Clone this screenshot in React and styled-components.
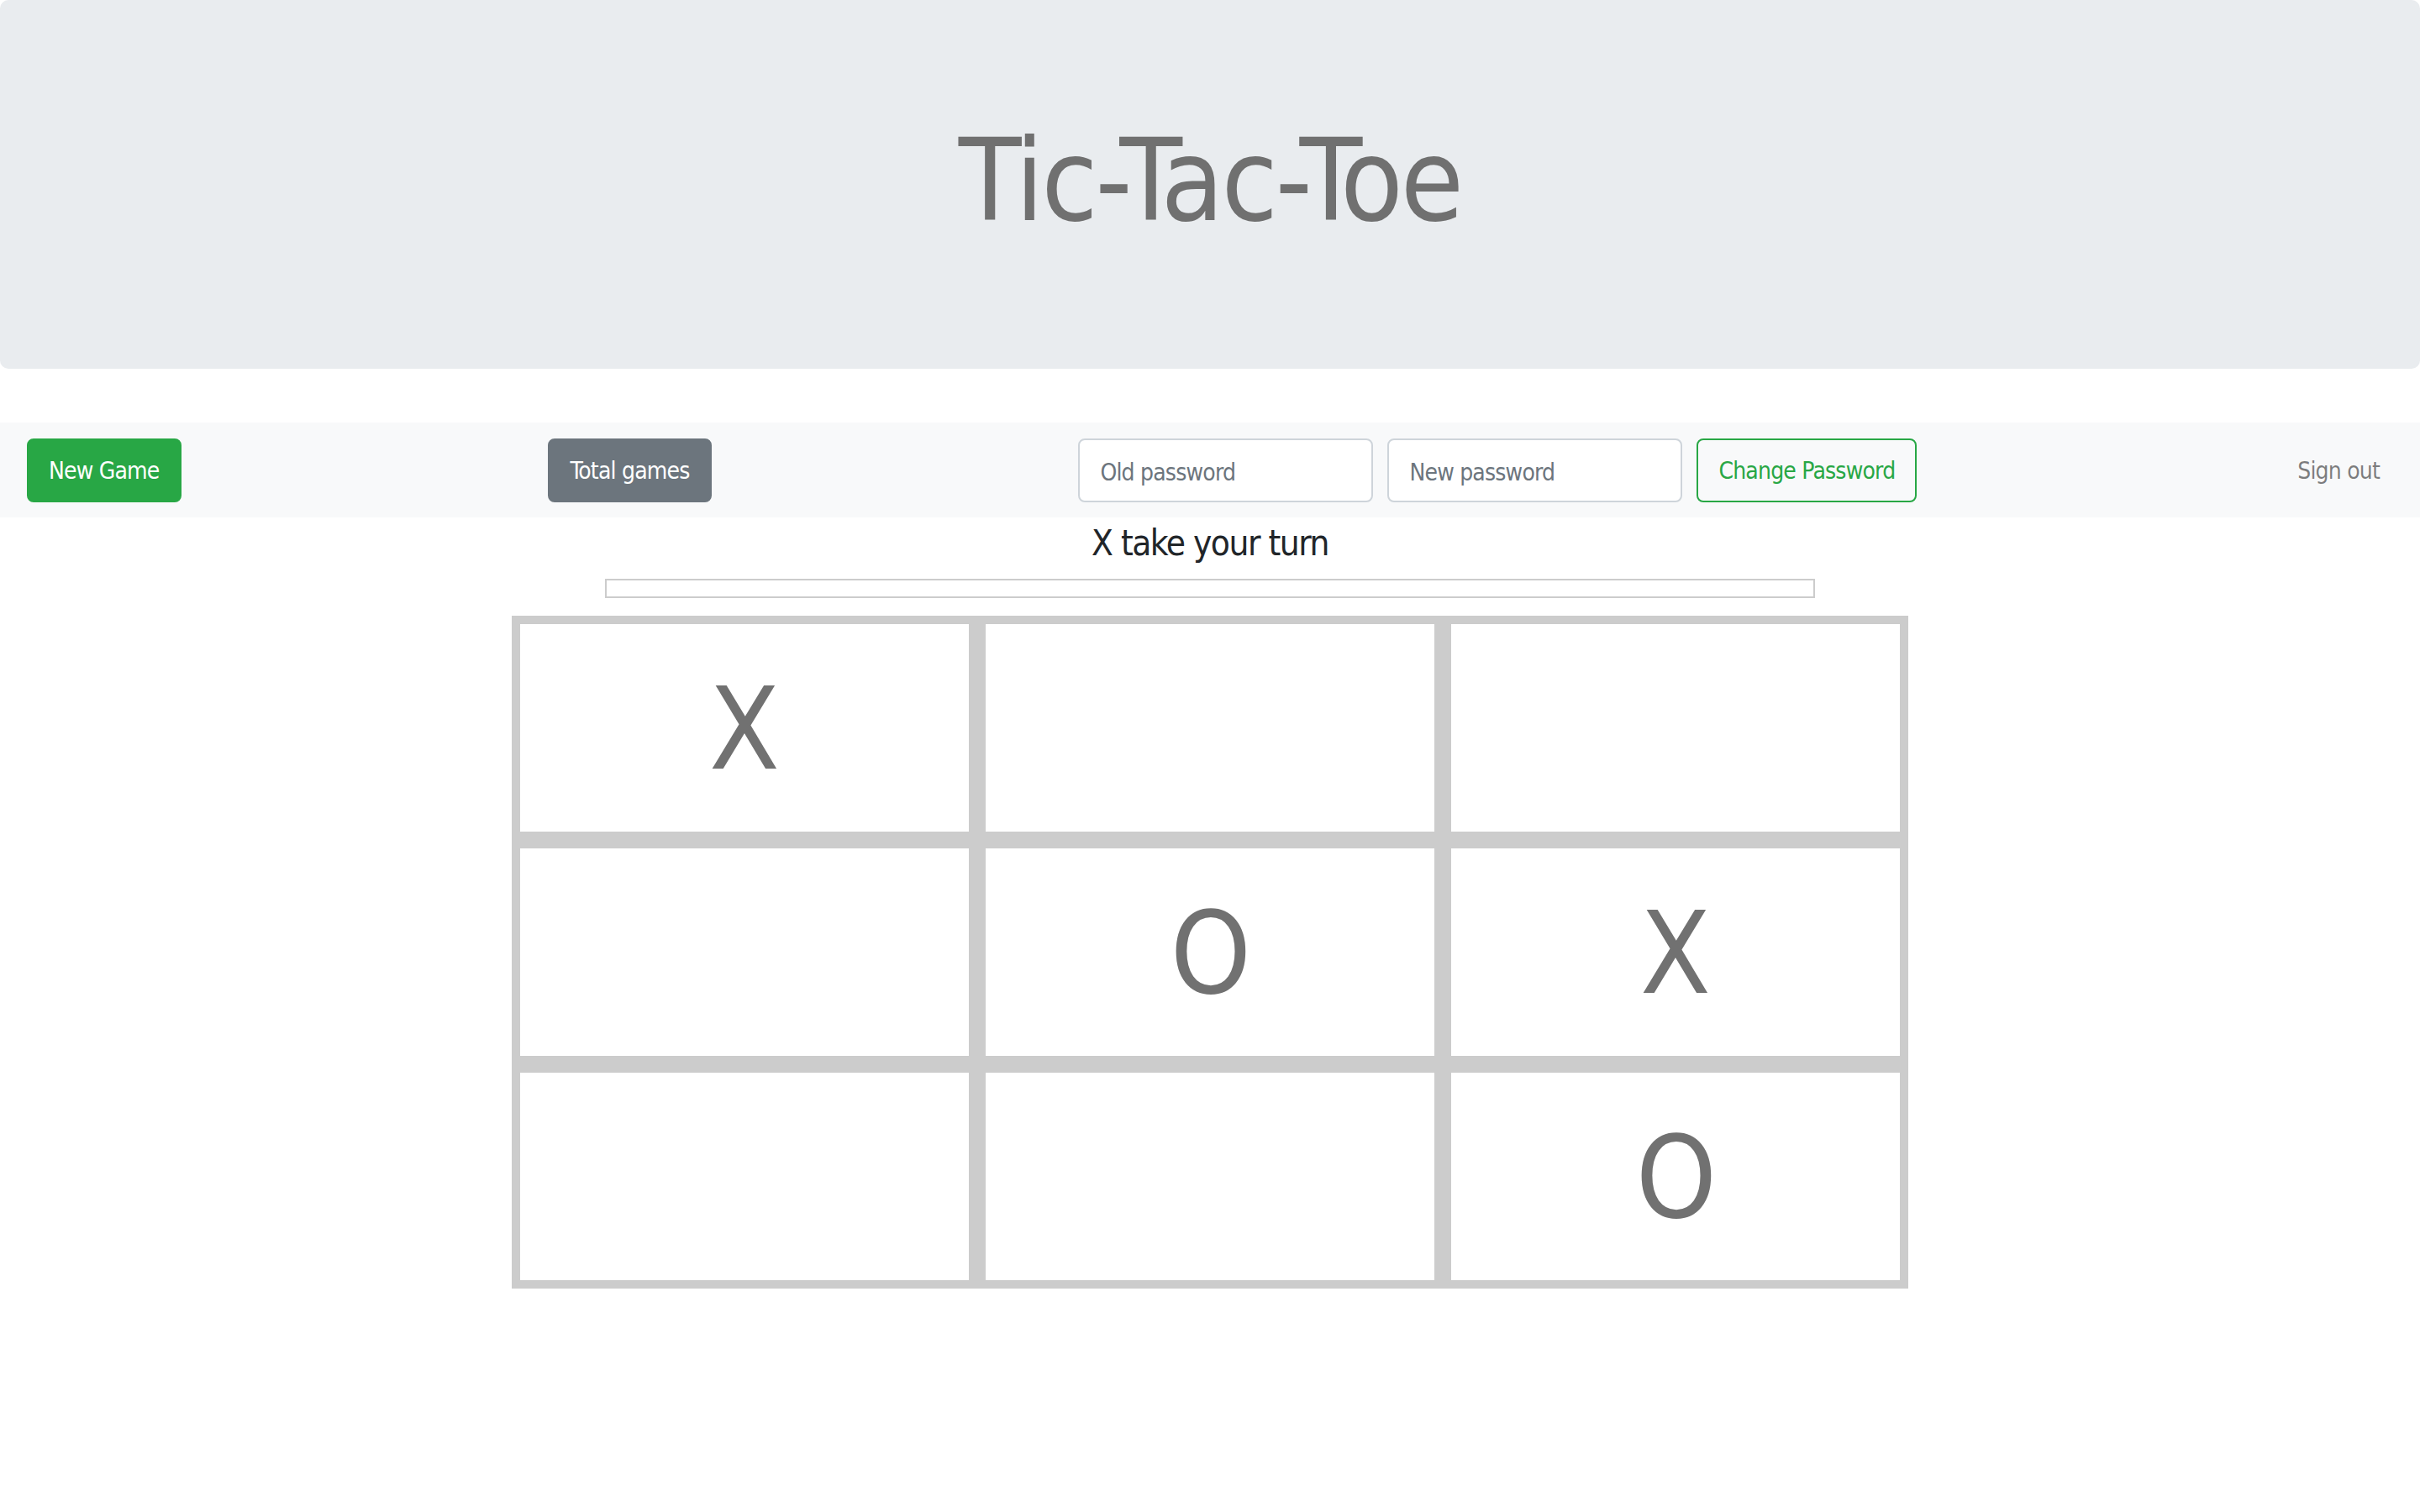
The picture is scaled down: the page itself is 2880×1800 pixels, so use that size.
import React from 'react'
import styled, { createGlobalStyle } from 'styled-components'

const GlobalStyle = createGlobalStyle`
    body {
        margin: 0;
        background: #fff;
        font-family: "Liberation Sans Narrow", "DejaVu Sans Condensed", "Liberation Sans", sans-serif;
    }
    * {
        box-sizing: border-box;
    }
`

const board = ['X', '', '', '', 'O', 'X', '', '', 'O']

const App = () => {
    return (
        <>
            <GlobalStyle />
            <Jumbotron>
                <Title>Tic-Tac-Toe</Title>
            </Jumbotron>
            <Navbar>
                <Button variant="success">New Game</Button>
                <Button variant="secondary">Total games</Button>
                <PasswordForm>
                    <Input type="password" placeholder="Old password" />
                    <Input type="password" placeholder="New password" />
                    <Button variant="outline">Change Password</Button>
                </PasswordForm>
                <NavLink>Sign out</NavLink>
            </Navbar>
            <Turn>X take your turn</Turn>
            <Message />
            <Board>
                {board.map((mark, i) => (
                    <Cell key={i} mark={mark}>{mark}</Cell>
                ))}
            </Board>
        </>
    )
}

const Jumbotron = styled.header`
    background-color: #e9ecef;
    border-radius: 10px;
    padding: 134px 64px 142px;
    margin-bottom: 64px;
`

const Title = styled.h1`
    margin: 0;
    font-size: 136px;
    font-weight: 400;
    line-height: 1.2;
    letter-spacing: -3px;
    text-align: center;
    color: #707070;
`

const Navbar = styled.nav`
    display: flex;
    justify-content: space-between;
    align-items: center;
    padding: 19px 32px 18px;
    background-color: #f8f9fa;
`

const Button = styled.button`
    font-family: inherit;
    font-size: 28px;
    letter-spacing: -0.8px;
    line-height: 48px;
    padding: 13px 24px 11px;
    border-radius: 8px;
    border: 2px solid transparent;
    cursor: pointer;
    white-space: nowrap;
    color: ${p => (p.variant === 'outline' ? '#28a745' : '#fff')};
    background-color: ${p =>
        p.variant === 'success' ? '#28a745' : p.variant === 'secondary' ? '#6c757d' : 'transparent'};
    border-color: ${p =>
        p.variant === 'secondary' ? '#6c757d' : '#28a745'};
`

const PasswordForm = styled.form`
    display: flex;
    align-items: center;
    gap: 17px;
`

const Input = styled.input`
    width: 351px;
    height: 76px;
    font-family: inherit;
    font-size: 28px;
    letter-spacing: -0.8px;
    padding: 14px 24px 10px;
    color: #495057;
    background: #fff;
    border: 2px solid #ced4da;
    border-radius: 8px;

    &::placeholder {
        color: #6c757d;
    }
`

const NavLink = styled.a`
    font-size: 28px;
    letter-spacing: -0.8px;
    line-height: 48px;
    padding: 2px 16px 0;
    color: rgba(0, 0, 0, 0.5);
    cursor: pointer;
`

const Turn = styled.h4`
    margin: 2px 0 14px;
    font-size: 42px;
    font-weight: 400;
    letter-spacing: -1.5px;
    line-height: 57px;
    text-align: center;
    color: #212529;
`

const Message = styled.div`
    width: 1440px;
    height: 23px;
    margin: 0 auto 21px;
    border: 2px solid #ccc;
`

const Board = styled.div`
    display: grid;
    grid-template-columns: repeat(3, 554px);
    grid-auto-rows: 267px;
    justify-content: center;
`

const Cell = styled.div`
    display: flex;
    justify-content: center;
    align-items: center;
    border: 10px solid #ccc;
    font-size: 136px;
    color: #717171;
    line-height: 1;
    padding-top: 2px;
    letter-spacing: ${p => (p.mark === 'O' ? '-2px' : '0')};
`

export default App
